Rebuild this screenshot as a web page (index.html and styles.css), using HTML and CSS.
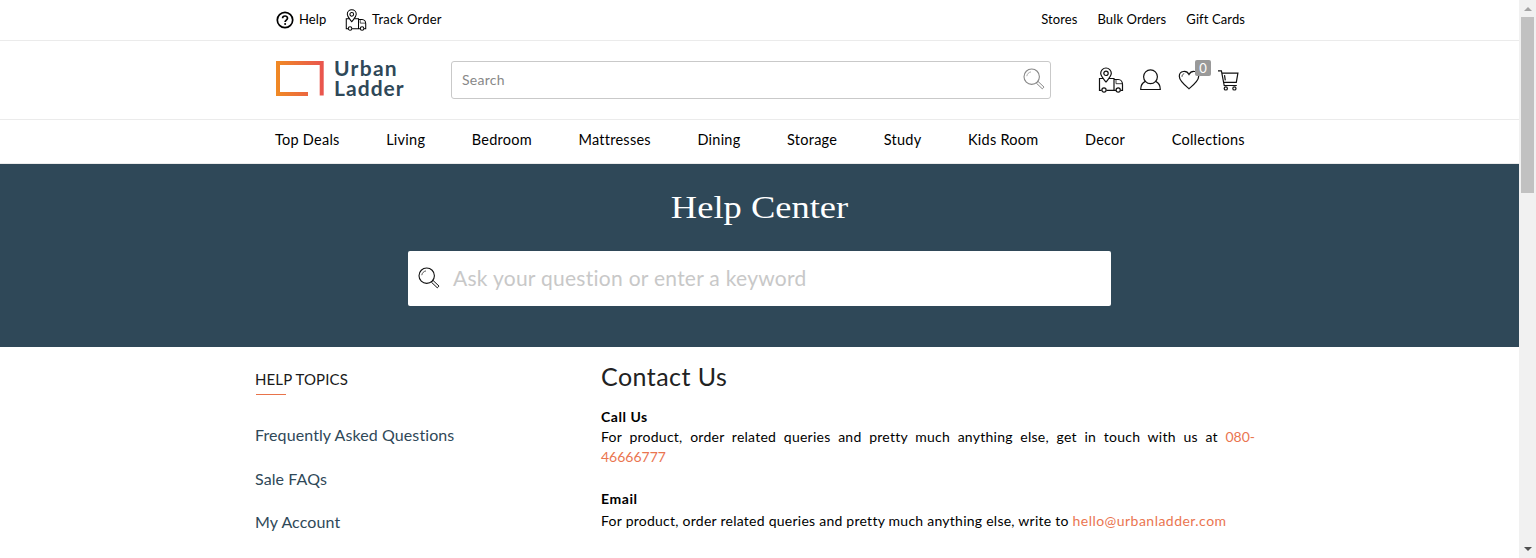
FILE: index.html
```html
<!DOCTYPE html>
<html lang="en">
<head>
<meta charset="utf-8">
<title>Help Center - Urban Ladder</title>
<link rel="stylesheet" href="styles.css">
</head>
<body>
<svg class="defs" aria-hidden="true">
  <symbol id="truck" viewBox="0 0 26 26">
    <g fill="none" stroke="currentColor" stroke-width="1.2">
      <path d="M3.6 23.4H1.5V11.5H5M11 11.5h5v11.9H8.4M16 12.5h4.2c2.8 0 4.3 2.6 4.3 5v5.9h-2M16 23.4h2"/>
      <path d="M8 15C5.600 11.700 2.700 9.300 2.700 6.300a5.300 5.300 0 0 1 10.600 0C13.300 9.300 10.400 11.700 8 15z"/>
      <path d="M18 12.5v4.200h6.300" stroke-width=".8"/>
      <circle cx="8" cy="6.300" r="2.200"/><circle cx="6" cy="23" r="2.100"/><circle cx="20.200" cy="23" r="2.100"/>
    </g>
  </symbol>
  <symbol id="magnifier" viewBox="0 0 22 22">
    <g fill="none" stroke="currentColor">
      <circle cx="8.700" cy="8.700" r="7.700" stroke-width="1.100"/>
      <path d="M3.800 8.200c.3-2.300 1.900-3.900 4.200-4.300" stroke-width=".7"/>
      <path d="M13.300 15.100l1.700-1.700 6 5.700-1.700 1.700z" stroke-width="1"/>
    </g>
  </symbol>
</svg>
<div class="window">
  <div class="page">
    <div class="topbar">
      <div class="inner">
        <a class="quick quick-help"><svg class="help-icon" viewBox="0 0 18 18"><g fill="none" stroke="#000" stroke-width="1.700"><circle cx="9" cy="9" r="7.700"/><path d="M6.600 7.300c0-3.100 4.900-3.100 4.900 0 0 1.700-2.400 1.900-2.400 3.600"/></g><circle cx="9.100" cy="13" r="1"/></svg><span>Help</span></a>
        <a class="quick quick-track"><svg class="track-icon"><use href="#truck"/></svg><span>Track Order</span></a>
        <div class="top-links"><a>Stores</a><a>Bulk Orders</a><a>Gift Cards</a></div>
      </div>
    </div>
    <header class="header">
      <div class="inner">
        <a class="logo">
          <svg class="logo-mark" viewBox="0 0 48 36"><defs><linearGradient id="brand" gradientUnits="userSpaceOnUse" x1="0" y1="0" x2="48" y2="0"><stop offset="0" stop-color="#f08a24"/><stop offset="1" stop-color="#e9544f"/></linearGradient></defs><path d="M32 33H2V2h43.700v32.500" fill="none" stroke="url(#brand)" stroke-width="4"/></svg>
          <span class="logo-text"><span class="urban">Urban</span><span class="ladder">Ladder</span></span>
        </a>
        <div class="search"><span>Search</span><svg class="search-icon"><use href="#magnifier"/></svg></div>
        <div class="actions">
          <svg class="action-truck"><use href="#truck"/></svg>
          <svg class="action-user" viewBox="0 0 21 22"><g fill="none" stroke="#111" stroke-width="1.200"><circle cx="10.500" cy="7.700" r="6.900"/><path d="M5.300 12.400C2.300 13.800.7 16.500.7 20.500h19.600c0-4-1.600-6.700-4.600-8.100"/></g></svg>
          <div class="wishlist"><svg class="action-heart" viewBox="0 0 22 20"><path d="M11 18.700C6.500 15 1.300 11 1.300 6.300 1.300.6 8.700-.2 11 4.500 13.300-.2 20.700.6 20.700 6.300c0 4.700-5.200 8.700-9.700 12.400z" fill="none" stroke="#111" stroke-width="1.200"/><path d="M4 6.800c0-1.700.8-2.700 2.200-3.100" fill="none" stroke="#111" stroke-width=".8"/></svg><span class="badge">0</span></div>
          <svg class="action-cart" viewBox="0 0 21 21"><g fill="none" stroke="#111" stroke-width="1.200"><path d="M0 .8h3.400L6.200 15.500h12.600M3.900 3.200h16l-1.600 9.200H5.600M6.500 5.200l.8 5.200"/><circle cx="7.800" cy="18.400" r="1.600"/><circle cx="16.400" cy="18.400" r="1.600"/></g></svg>
        </div>
      </div>
    </header>
    <nav class="nav">
      <div class="inner nav-links"><a>Top Deals</a><a>Living</a><a>Bedroom</a><a>Mattresses</a><a>Dining</a><a>Storage</a><a>Study</a><a>Kids Room</a><a>Decor</a><a>Collections</a></div>
    </nav>
    <section class="hero">
      <h1 class="hero-title">Help Center</h1>
      <div class="ask"><svg class="ask-icon"><use href="#magnifier"/></svg><span>Ask your question or enter a keyword</span></div>
    </section>
    <main class="content">
      <aside class="topics">
        <h2 class="topics-title">HELP TOPICS</h2>
        <a>Frequently Asked Questions</a><a>Sale FAQs</a><a>My Account</a>
      </aside>
      <article class="contact">
        <h2 class="contact-title">Contact Us</h2>
        <h3 class="call-title">Call Us</h3>
        <p class="call-text">For product, order related queries and pretty much anything else, get in touch with us at <a>080-46666777</a></p>
        <h3 class="email-title">Email</h3>
        <p class="email-text">For product, order related queries and pretty much anything else, write to <a>hello@urbanladder.com</a></p>
      </article>
    </main>
  </div>
  <div class="scrollbar"><i class="arrow arrow-up"></i><i class="thumb"></i><i class="arrow arrow-down"></i></div>
</div>
</body>
</html>
```
FILE: styles.css
```css
* { box-sizing: border-box; }
body { margin: 0; overflow: hidden; background: #fff; color: #000; font-family: Lato, "Open Sans", sans-serif; font-size: 14px; font-variant-ligatures: none; }
h1, h2, h3, p { margin: 0; font-weight: 400; }
svg { flex: none; display: block; }
.defs { display: none; }
.window { display: flex; height: 558px; }
.page { width: 1519px; overflow: hidden; }
.inner { width: 970px; margin: 0 0 0 275px; display: flex; }

.topbar { height: 41px; border-bottom: 1px solid #ebebeb; font-size: 13px; line-height: 39px; letter-spacing: .1px; }
.topbar .inner { height: 40px; align-items: flex-start; }
.quick { display: flex; align-items: flex-start; }
.quick-help { width: 70px; }
.help-icon { width: 18px; height: 18px; margin: 11px 5px 0 1px; }
.track-icon { width: 22px; height: 22px; margin: 9px 5px 0 0; }
.quick-track { letter-spacing: .25px; }
.top-links { margin-left: auto; display: flex; gap: 20px; }

.header { height: 79px; border-bottom: 1px solid #ebebeb; }
.header .inner { height: 78px; padding-top: 20px; }
.logo { width: 176px; display: flex; padding-left: 1px; color: #2f4858; }
.logo-mark { width: 48px; height: 36px; }
.logo-text { margin: -3px 0 0 10px; display: flex; flex-direction: column; font: 700 21px/20px Lato, sans-serif; }
.urban { letter-spacing: 1.300px; }
.ladder { letter-spacing: 1.050px; }
.search { width: 600px; height: 38px; border: 1px solid #c9c9c9; border-radius: 3px; padding: 0 5px 2px 10px; display: flex; align-items: center; justify-content: space-between; color: #888; letter-spacing: .25px; }
.search-icon { width: 22px; height: 22px; color: #888; }
.actions { display: flex; margin-left: 47px; color: #111; }
.action-truck { width: 26px; height: 26px; margin-top: 6px; }
.action-user { width: 21px; height: 22px; margin: 8px 0 0 16px; }
.wishlist { position: relative; margin: 9px 0 0 17px; }
.action-heart { width: 22px; height: 20px; }
.badge { position: absolute; left: 17px; top: -10px; width: 16px; height: 16px; border-radius: 2px; background: #999; color: #fff; font: 13px/16px Lato, sans-serif; text-align: center; }
.action-cart { width: 21px; height: 21px; margin: 9px 0 0 18px; }

.nav { height: 44px; border-bottom: 1px solid #ebebeb; }
.nav-links { justify-content: space-between; font-size: 14.500px; line-height: 40px; letter-spacing: .25px; }

.hero { height: 183px; background: #2f4858; color: #fff; padding-top: 23px; }
.hero-title { font: 32px/40px "Liberation Serif", serif; text-align: center; transform: scaleX(1.140); }
.ask { width: 703px; height: 55px; margin: 24px 0 0 408px; padding: 0 10px 3px; display: flex; align-items: center; background: #fff; border-radius: 2px; color: #c8c8c8; font-size: 21px; letter-spacing: .27px; }
.ask-icon { width: 22px; height: 22px; margin: 1px 13px 0 0; color: #111; }

.content { display: flex; padding-left: 255px; }
.topics { width: 345px; padding-top: 21px; display: flex; flex-direction: column; align-items: flex-start; font-size: 16px; line-height: 20px; letter-spacing: .1px; color: #2f4858; }
.topics-title { font-size: 15px; line-height: 22px; letter-spacing: .13px; color: #1a1a1a; margin-bottom: 30px; }
.topics-title::after { content: ""; display: block; width: 30px; height: 1px; margin: 4px 0 0 1px; background: #e8734a; }
.topics a { margin-bottom: 23.500px; }
.contact { width: 655px; padding: 13px 0 0 1px; font-size: 14px; line-height: 20px; letter-spacing: .25px; }
.contact a { color: #ea7550; }
.contact-title { font-size: 25px; line-height: 32px; letter-spacing: .45px; color: #222; }
.call-title, .email-title { font-size: 14px; font-weight: 700; line-height: 20px; letter-spacing: .55px; }
.call-title { margin-top: 15px; }
.call-text { text-align: justify; }
.call-text a { letter-spacing: 0; }
.email-title { margin-top: 22px; }
.email-text { margin-top: 2px; white-space: nowrap; }
.email-text a { letter-spacing: .47px; }

.scrollbar { width: 17px; background: #f1f1f1; display: flex; flex-direction: column; align-items: center; }
.arrow { width: 0; height: 0; border: 4px solid transparent; }
.arrow-up { border-top: 0; border-bottom-color: #a3a3a3; margin: 7px 0 6px; }
.thumb { width: 13px; height: 176px; background: #c1c1c1; }
.arrow-down { border-bottom: 0; border-top-color: #505050; margin: auto 0 7px; }
```
